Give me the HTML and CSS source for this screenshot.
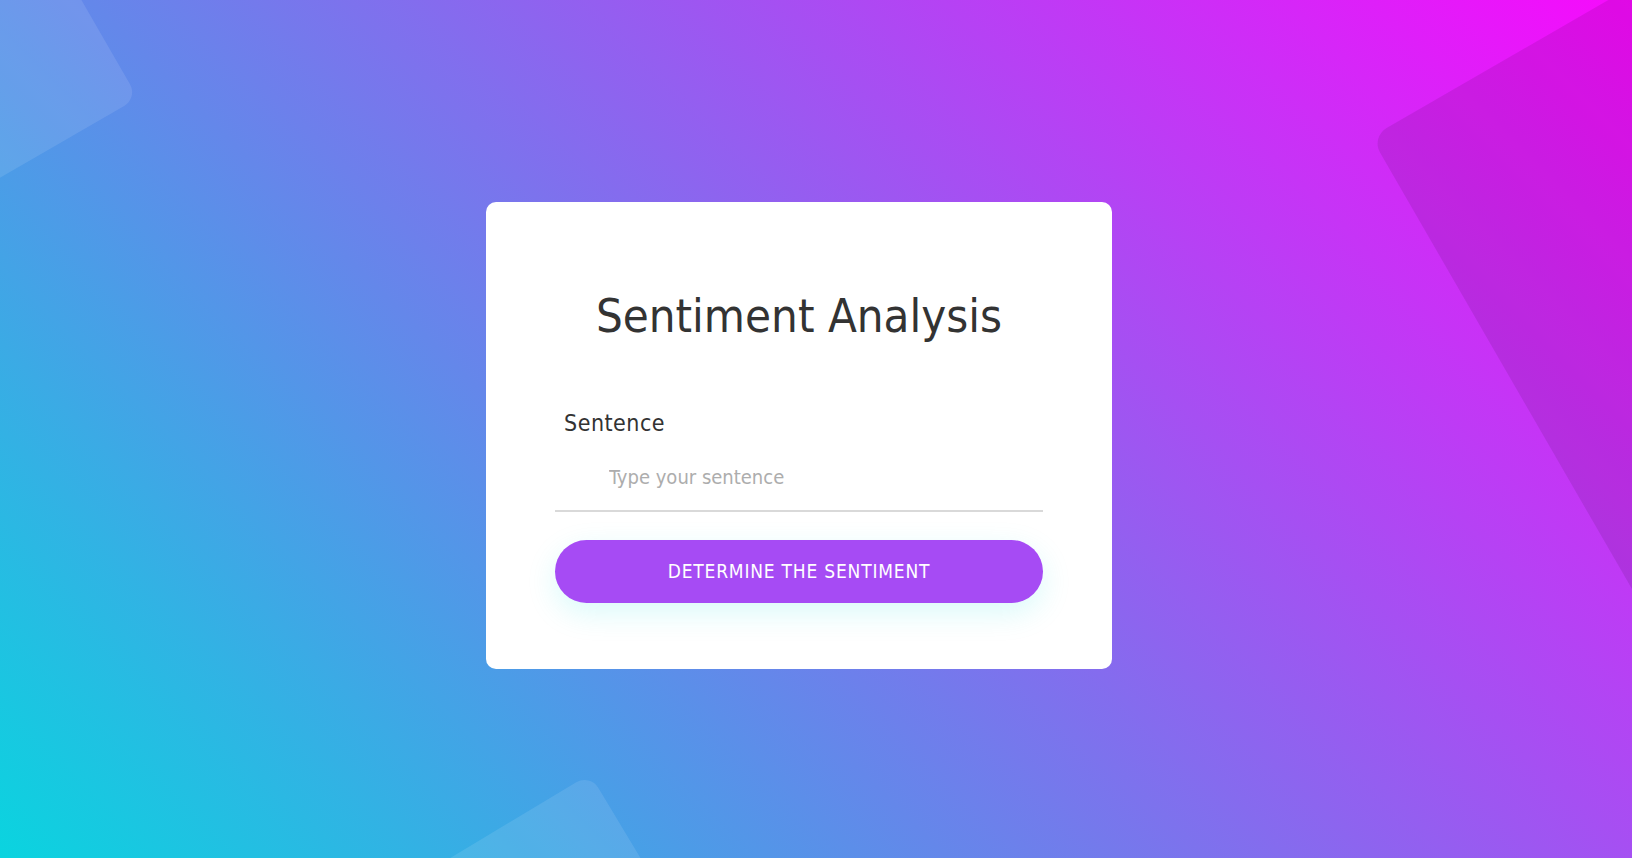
FILE: index.html
```html
<!DOCTYPE html>
<html lang="en">
<head>
<meta charset="utf-8">
<title>Sentiment Analysis</title>
<link rel="stylesheet" href="styles.css">
</head>
<body>
<svg class="decor" width="1632" height="858" viewBox="0 0 1632 858" aria-hidden="true">
  <rect x="-500" y="-500" width="500" height="500" rx="16" transform="translate(138 98) rotate(-30)" fill="#fff" fill-opacity="0.1"/>
  <rect x="0" y="0" width="700" height="700" rx="18" transform="translate(1371 137) rotate(-30)" fill="#000" fill-opacity="0.09"/>
  <rect x="0" y="0" width="400" height="400" rx="16" transform="translate(590 774) rotate(59)" fill="#fff" fill-opacity="0.1"/>
</svg>
<main class="page">
  <form class="card" onsubmit="return false">
    <h1 class="title">Sentiment Analysis</h1>
    <label class="label" for="sentence">Sentence</label>
    <input class="input" id="sentence" type="text" placeholder="Type your sentence">
    <button class="btn" type="submit">DETERMINE THE SENTIMENT</button>
  </form>
</main>
</body>
</html>
```

FILE: styles.css
```css
html, body {
  margin: 0;
  padding: 0;
  height: 100%;
}
body {
  background: linear-gradient(45deg, #0ad4df, #f70afc);
  font-family: "DejaVu Sans Condensed", "DejaVu Sans", sans-serif;
  overflow: hidden;
  position: relative;
}
.decor {
  position: absolute;
  left: 0;
  top: 0;
}
.page {
  position: relative;
  height: 100%;
  box-sizing: border-box;
  display: flex;
  align-items: center;
  justify-content: center;
  padding: 12px 34px 0 0;
}
.card {
  width: 626px;
  box-sizing: border-box;
  background: #fff;
  border-radius: 10px;
  padding: 86px 69px 66px;
  display: flex;
  flex-direction: column;
}
.title {
  margin: 0;
  font-size: 47px;
  line-height: 56px;
  font-weight: normal;
  color: #333;
  text-align: center;
}
.label {
  margin-top: 66px;
  padding-left: 9px;
  font-size: 23px;
  letter-spacing: 0.5px;
  line-height: 26px;
  color: #333;
}
.input {
  margin-top: 8px;
  display: block;
  width: 100%;
  height: 68px;
  box-sizing: border-box;
  border: none;
  border-bottom: 2px solid #d9d9d9;
  padding: 0 0 0 54px;
  font-family: inherit;
  font-size: 20px;
  color: #555;
  outline: none;
  background: transparent;
}
.input::placeholder {
  color: #adadad;
}
.btn {
  margin-top: 28px;
  height: 63px;
  width: 100%;
  border: none;
  border-radius: 32px;
  background: #a64bf4;
  color: #fff;
  font-family: inherit;
  font-size: 19px;
  letter-spacing: 0.8px;
  box-shadow: 0 10px 30px 0 rgba(0, 219, 222, 0.15);
  cursor: pointer;
}
```
